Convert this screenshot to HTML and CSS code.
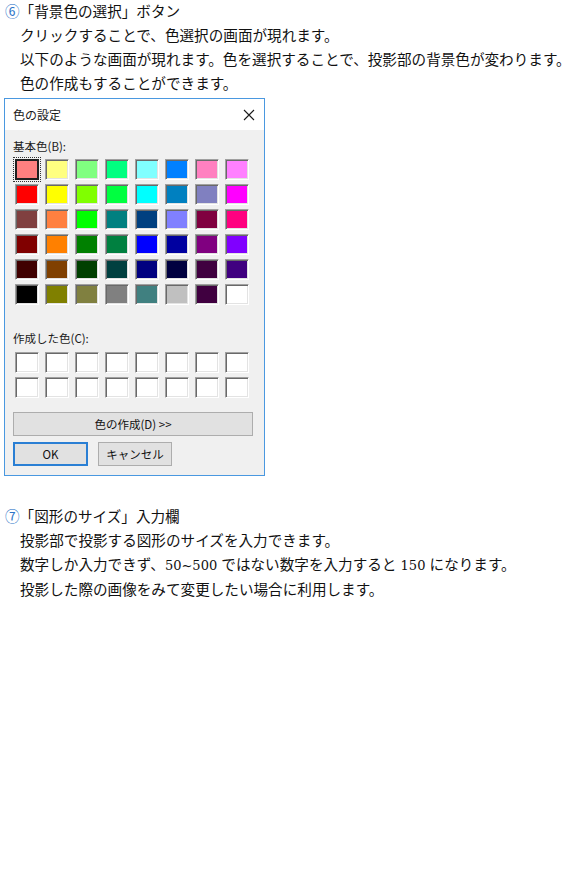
FILE: index.html
```html
<!DOCTYPE html>
<html lang="ja">
<head>
<meta charset="utf-8">
<title>色の設定</title>
<link rel="stylesheet" href="styles.css">
</head>
<body>
<section class="doc doc-first">
  <p class="head"><span class="num">⑥</span>「背景色の選択」ボタン</p>
  <p class="ind">クリックすることで、色選択の画面が現れます。</p>
  <p class="ind">以下のような画面が現れます。色を選択することで、投影部の背景色が変わります。</p>
  <p class="ind">色の作成もすることができます。</p>
</section>

<div class="dialog">
  <div class="titlebar">
    <span class="title">色の設定</span>
    <svg class="close" width="12" height="12" viewBox="0 0 12 12"><path d="M1 1 L11 11 M11 1 L1 11" stroke="#1a1a1a" stroke-width="1.1" fill="none"/></svg>
  </div>
  <div class="body">
    <div class="label">基本色(B):</div>
    <div class="grid basic">
      <span class="sw sel" style="background:#FF8080"></span>
      <span class="sw" style="background:#FFFF80"></span>
      <span class="sw" style="background:#80FF80"></span>
      <span class="sw" style="background:#00FF80"></span>
      <span class="sw" style="background:#80FFFF"></span>
      <span class="sw" style="background:#0080FF"></span>
      <span class="sw" style="background:#FF80C0"></span>
      <span class="sw" style="background:#FF80FF"></span>

      <span class="sw" style="background:#FF0000"></span>
      <span class="sw" style="background:#FFFF00"></span>
      <span class="sw" style="background:#80FF00"></span>
      <span class="sw" style="background:#00FF40"></span>
      <span class="sw" style="background:#00FFFF"></span>
      <span class="sw" style="background:#0080C0"></span>
      <span class="sw" style="background:#8080C0"></span>
      <span class="sw" style="background:#FF00FF"></span>

      <span class="sw" style="background:#804040"></span>
      <span class="sw" style="background:#FF8040"></span>
      <span class="sw" style="background:#00FF00"></span>
      <span class="sw" style="background:#008080"></span>
      <span class="sw" style="background:#004080"></span>
      <span class="sw" style="background:#8080FF"></span>
      <span class="sw" style="background:#800040"></span>
      <span class="sw" style="background:#FF0080"></span>

      <span class="sw" style="background:#800000"></span>
      <span class="sw" style="background:#FF8000"></span>
      <span class="sw" style="background:#008000"></span>
      <span class="sw" style="background:#008040"></span>
      <span class="sw" style="background:#0000FF"></span>
      <span class="sw" style="background:#0000A0"></span>
      <span class="sw" style="background:#800080"></span>
      <span class="sw" style="background:#8000FF"></span>

      <span class="sw" style="background:#400000"></span>
      <span class="sw" style="background:#804000"></span>
      <span class="sw" style="background:#004000"></span>
      <span class="sw" style="background:#004040"></span>
      <span class="sw" style="background:#000080"></span>
      <span class="sw" style="background:#000040"></span>
      <span class="sw" style="background:#400040"></span>
      <span class="sw" style="background:#400080"></span>

      <span class="sw" style="background:#000000"></span>
      <span class="sw" style="background:#808000"></span>
      <span class="sw" style="background:#808040"></span>
      <span class="sw" style="background:#808080"></span>
      <span class="sw" style="background:#408080"></span>
      <span class="sw" style="background:#C0C0C0"></span>
      <span class="sw" style="background:#400040"></span>
      <span class="sw" style="background:#FFFFFF"></span>
    </div>

    <div class="label label-custom">作成した色(C):</div>
    <div class="grid custom">
      <span class="sw"></span><span class="sw"></span><span class="sw"></span><span class="sw"></span>
      <span class="sw"></span><span class="sw"></span><span class="sw"></span><span class="sw"></span>
      <span class="sw"></span><span class="sw"></span><span class="sw"></span><span class="sw"></span>
      <span class="sw"></span><span class="sw"></span><span class="sw"></span><span class="sw"></span>
    </div>

    <div class="btn btn-wide">色の作成(D) &gt;&gt;</div>
    <div class="btnrow">
      <div class="btn btn-ok">OK</div>
      <div class="btn btn-cancel">キャンセル</div>
    </div>
  </div>
</div>

<section class="doc doc-second">
  <p class="head"><span class="num">⑦</span>「図形のサイズ」入力欄</p>
  <p class="ind">投影部で投影する図形のサイズを入力できます。</p>
  <p class="ind">数字しか入力できず、<span class="lat">50~500 </span>ではない数字を入力すると<span class="lat"> 150 </span>になります。</p>
  <p class="ind">投影した際の画像をみて変更したい場合に利用します。</p>
</section>
</body>
</html>
```

FILE: styles.css
```css
html, body {
  margin: 0;
  padding: 0;
  background: #ffffff;
}

body {
  font-family: "Liberation Serif", "Noto Sans CJK JP", serif;
  color: #111;
}

.doc {
  padding-left: 5px;
  font-size: 14.6px;
  line-height: 24px;
  white-space: nowrap;
}

.doc p {
  margin: 0;
}

.doc-first {
  margin-top: -1px;
}

.doc-second {
  margin-top: 28px;
}

.num {
  color: #2e75c8;
  font-family: "Noto Sans CJK JP", sans-serif;
}

.ind {
  padding-left: 15px;
}

.lat {
  font-family: "DejaVu Serif", "Liberation Serif", serif;
  font-size: 13px;
}

/* Dialog */
.dialog {
  box-sizing: border-box;
  width: 261px;
  margin: 2px 0 0 4px;
  border: 1px solid #4a98e0;
  background: #f0f0f0;
  font-family: "Noto Sans CJK JP", sans-serif;
  font-size: 11.5px;
  color: #1a1a1a;
}

.titlebar {
  height: 31px;
  background: #ffffff;
  display: flex;
  align-items: center;
  justify-content: space-between;
  padding: 0 9px 0 8px;
}

.title {
  font-size: 12px;
  line-height: 16px;
}

.close {
  display: block;
}

.body {
  padding: 8px 8px 9px 8px;
  display: flex;
  flex-direction: column;
}

.label {
  line-height: 16px;
  height: 16px;
}

.label-custom {
  margin-top: 25px;
}

.grid {
  display: grid;
  grid-template-columns: repeat(8, 24px);
  grid-auto-rows: 21px;
  column-gap: 6px;
  row-gap: 4px;
  margin-left: 2px;
}

.basic {
  margin-top: 5px;
}

.custom {
  margin-top: 6px;
}

.sw {
  box-sizing: border-box;
  display: block;
  background: #ffffff;
  border-top: 1px solid #a0a0a0;
  border-left: 1px solid #a0a0a0;
  border-right: 1px solid #ffffff;
  border-bottom: 1px solid #ffffff;
  box-shadow: inset 1px 1px 0 #696969, inset -1px -1px 0 #e3e3e3;
}

.sw.sel {
  border: 1px solid #202020;
  box-shadow: inset 0 0 0 1px #202020;
  outline: 1px dotted #333;
  outline-offset: 1px;
}

.btn {
  box-sizing: border-box;
  height: 24px;
  background: #e1e1e1;
  border: 1px solid #adadad;
  display: flex;
  align-items: center;
  justify-content: center;
  font-size: 11.5px;
  color: #111;
}

.btn-wide {
  width: 240px;
  margin-top: 14px;
}

.btnrow {
  display: flex;
  gap: 10px;
  margin-top: 6px;
}

.btn-ok {
  width: 75px;
  border: 2px solid #2a7fd4;
}

.btn-cancel {
  width: 74px;
}
```
